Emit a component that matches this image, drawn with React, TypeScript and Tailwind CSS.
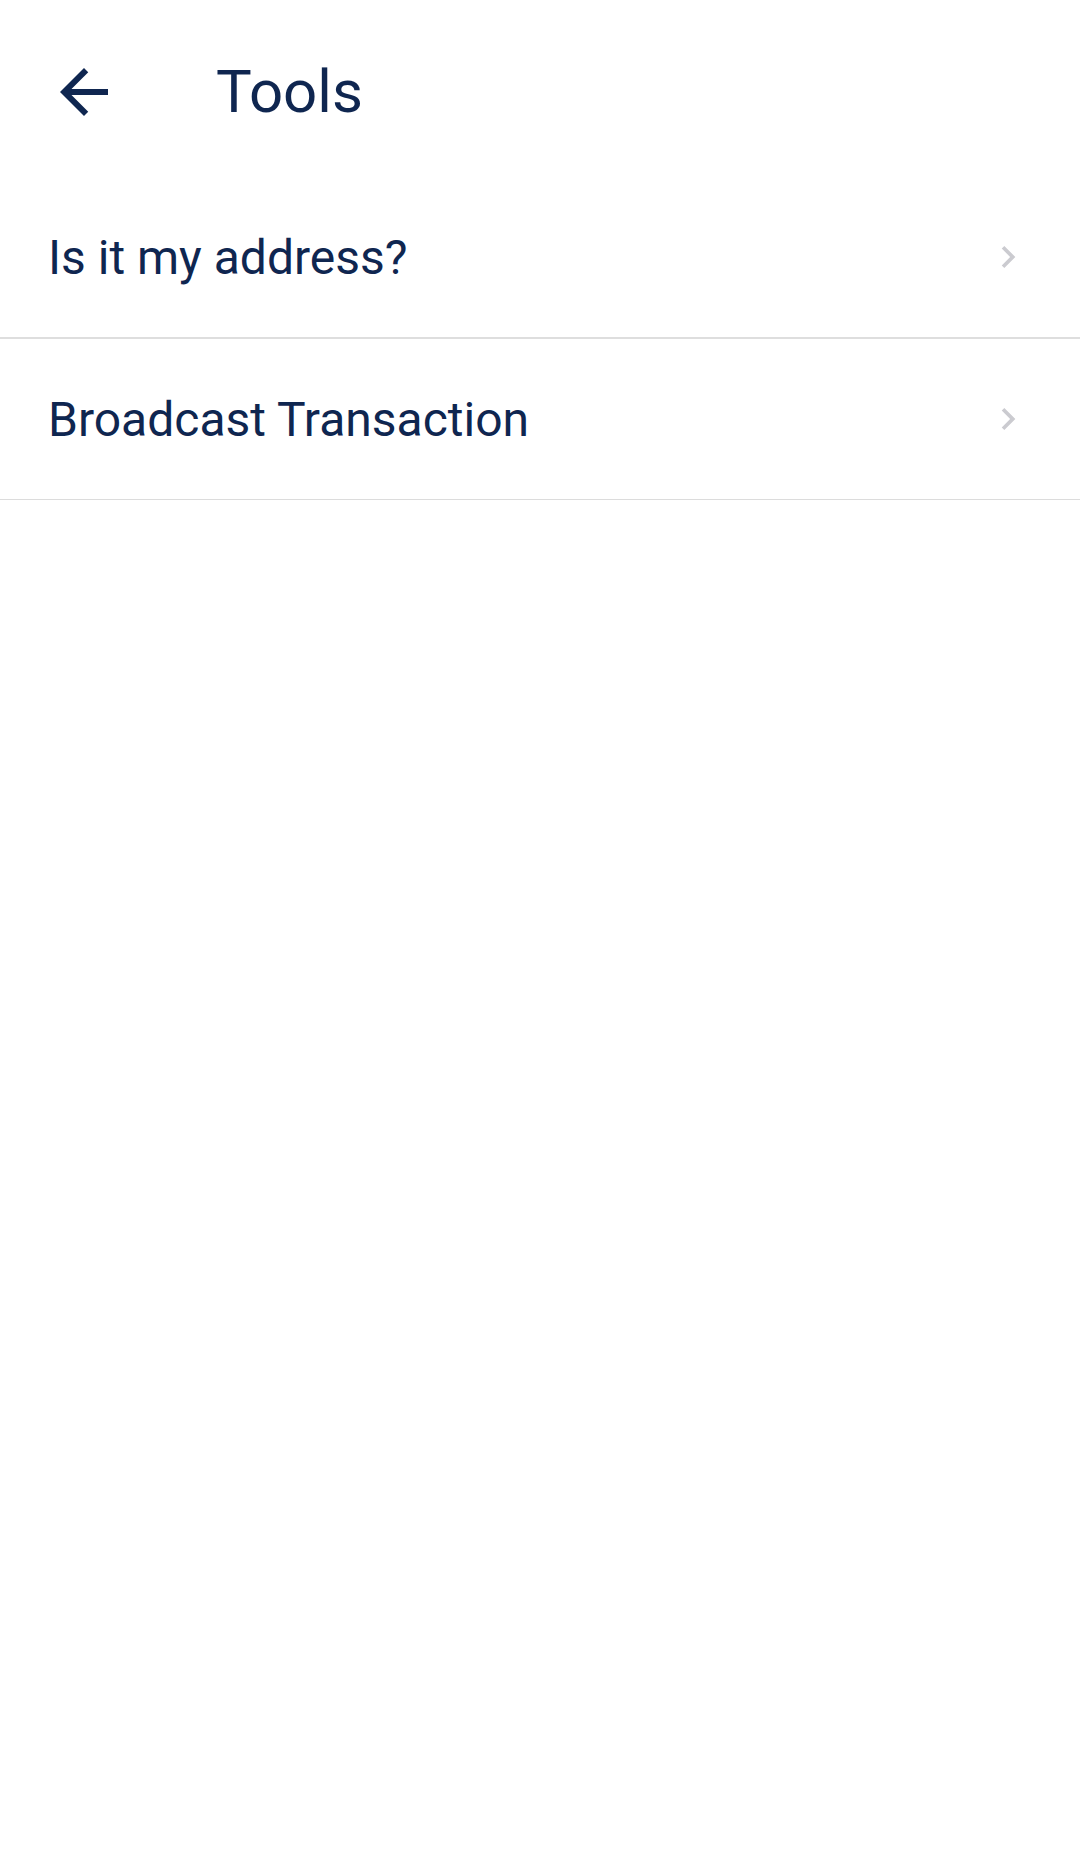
import { ReactNode } from "react";

const ArrowBack = () => (
  <svg viewBox="0 0 24 24" className="w-[72px] h-[72px]" fill="#0f2650">
    <path d="M20 11H7.83l5.59-5.59L12 4l-8 8 8 8 1.41-1.41L7.83 13H20v-2z" />
  </svg>
);

const Chevron = () => (
  <svg viewBox="0 0 24 24" className="w-[44px] h-[44px]" fill="#cbcbd0">
    <path d="M10 6L8.59 7.41 13.17 12l-4.58 4.59L10 18l6-6z" />
  </svg>
);

function ToolRow({ label, divider }: { label: ReactNode; divider: string }) {
  return (
    <div className={divider}>
      <div className="flex h-[160px] items-center justify-between pl-[48px] pr-[50px]">
        <span className="mt-[2px] text-[48px] leading-none text-[#0f2650]">{label}</span>
        <Chevron />
      </div>
    </div>
  );
}

export default function App() {
  return (
    <div
      className="min-h-[1856px] w-full bg-white"
      style={{ fontFamily: "Roboto, 'Noto Sans', sans-serif" }}
    >
      <header className="flex h-[177px] items-start pt-[56px]">
        <div className="ml-[48px]">
          <ArrowBack />
        </div>
        <h1 className="ml-[96px] mt-[2px] text-[60px] leading-[68px] text-[#0f2650]">Tools</h1>
      </header>

      <ToolRow label="Is it my address?" divider="border-b-2 border-[#dedede]" />
      <ToolRow label="Broadcast Transaction" divider="border-b border-[#dcdcdc]" />
    </div>
  );
}
